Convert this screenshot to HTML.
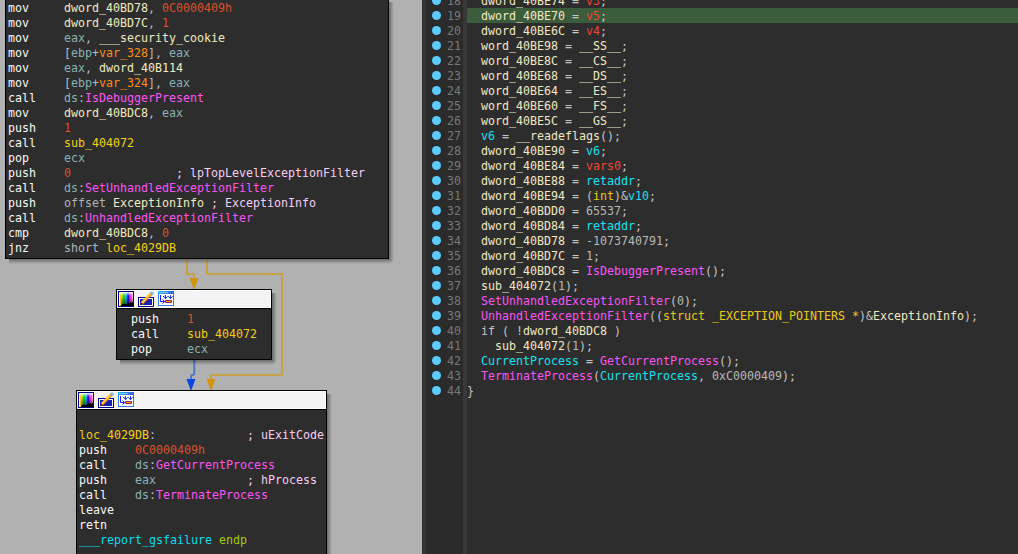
<!DOCTYPE html><html><head><meta charset="utf-8"><title>IDA</title><style>
html,body{margin:0;padding:0}
body{width:1018px;height:554px;overflow:hidden;background:#2d2d2d;position:relative;
 font-family:"DejaVu Sans Mono","Liberation Mono",monospace;font-size:11.63px;line-height:15px}
#left{position:absolute;left:0;top:0;width:422px;height:554px;background:#b1b1b1;overflow:hidden}
#split{position:absolute;left:422px;top:0;width:4px;height:554px;background:#333333}
#gutter{position:absolute;left:426px;top:0;width:37px;height:554px;background:#2b2b2b}
#gsep{position:absolute;left:463px;top:0;width:4px;height:554px;background:#383838}
#code{position:absolute;left:467px;top:0;width:551px;height:554px;background:#2d2d2d;overflow:hidden}
.node{position:absolute;border:1px solid #000;background:#2d2d2d;box-sizing:border-box}
.sh{position:absolute;background:
 linear-gradient(to right,rgba(0,0,0,.40),rgba(0,0,0,0)) right 0 top 4px/5px calc(100% - 9px) no-repeat,
 linear-gradient(to bottom,rgba(0,0,0,.40),rgba(0,0,0,0)) left 4px bottom 0/calc(100% - 9px) 5px no-repeat,
 radial-gradient(circle at 0 0,rgba(0,0,0,.40),rgba(0,0,0,0) 5px) right bottom/5px 5px no-repeat}
.hdr{height:18px;background:#f3f3f3;border-bottom:1px solid #000;position:relative;box-shadow:inset 0 0 0 1px #fff;
 background-image:linear-gradient(#fff,#fff);background-size:1px 1px;background-repeat:no-repeat;background-position:-9px -9px}
.hdr i{position:absolute;left:62px;right:3px;top:6px;height:10px;background-image:radial-gradient(circle at .5px .5px,#fff .6px,transparent .8px);background-size:4px 4px}
.body{padding:2px 0 2px 2px}
.l{height:15px;white-space:pre;display:block}
.ic{position:absolute;top:1px;width:16px;height:16px}
.m{color:#fafafa}.d{color:#f0ebc0}.n{color:#d9522e}.r{color:#88b2b4}.p{color:#b4bcc4}
.v{color:#fb8f14}.i{color:#f955f2}.s{color:#f5cf12}.c{color:#f8cef6}.k{color:#b0b4b8}
.b{color:#0cdcec}.e{color:#a8cc08}
.g{color:#f2e8c2}.x{color:#c6c6c6}.lv{color:#f04636}.cy{color:#18e0f0}.ty{color:#ecc81c}.nu{color:#b8b8b8}
.ln{position:absolute;left:447px;color:#787878;white-space:pre;height:15px;line-height:17px}
.dot{position:absolute;left:432px;width:9px;height:9px;border-radius:50%;background:#5ccbff}
.cl{position:absolute;left:0;width:551px;height:15px;white-space:pre;line-height:17px}
.hl{background:#3b5d3b}
</style></head><body>
<div id="left">
<svg style="position:absolute;left:0;top:0" width="422" height="554" viewBox="0 0 422 554">
<g fill="none" stroke-width="2" stroke="#c7a249" stroke-linejoin="round">
<path d="M187 259 V274 H194 V280"/>
<path d="M207 259 V274 H282 V375 H211 V381"/>
</g>
<path d="M194.3 360 V374 L193 375 H191.8 L191 376 V381" fill="none" stroke="#4c78cf" stroke-width="2" stroke-linejoin="round"/>
<path d="M189.5 278 H198.5 L194.4 289 H193.6 Z" fill="#cf940a"/>
<path d="M206.5 379 H215.5 L211.4 390 H210.6 Z" fill="#cf940a"/>
<path d="M186.5 379 H195.5 L191.4 390 H190.6 Z" fill="#0846de"/>
</svg>
<div class="sh" style="left:5px;top:-2px;width:389px;height:266px"></div><div class="node" style="left:5px;top:-2px;width:384px;height:261px;"><div class="body" style="padding-left:2px;padding-top:2px"><span class="l"><span class="m">mov     </span><span class="d">dword_40BD78</span><span class="p">, </span><span class="n">0C0000409h</span></span><span class="l"><span class="m">mov     </span><span class="d">dword_40BD7C</span><span class="p">, </span><span class="n">1</span></span><span class="l"><span class="m">mov     </span><span class="r">eax</span><span class="p">, </span><span class="d">___security_cookie</span></span><span class="l"><span class="m">mov     </span><span class="p">[</span><span class="r">ebp</span><span class="p">+</span><span class="v">var_328</span><span class="p">]</span><span class="p">, </span><span class="r">eax</span></span><span class="l"><span class="m">mov     </span><span class="r">eax</span><span class="p">, </span><span class="d">dword_40B114</span></span><span class="l"><span class="m">mov     </span><span class="p">[</span><span class="r">ebp</span><span class="p">+</span><span class="v">var_324</span><span class="p">]</span><span class="p">, </span><span class="r">eax</span></span><span class="l"><span class="m">call    </span><span class="r">ds</span><span class="p">:</span><span class="i">IsDebuggerPresent</span></span><span class="l"><span class="m">mov     </span><span class="d">dword_40BDC8</span><span class="p">, </span><span class="r">eax</span></span><span class="l"><span class="m">push    </span><span class="n">1</span></span><span class="l"><span class="m">call    </span><span class="s">sub_404072</span></span><span class="l"><span class="m">pop     </span><span class="r">ecx</span></span><span class="l"><span class="m">push    </span><span class="n">0</span>               <span class="c">; lpTopLevelExceptionFilter</span></span><span class="l"><span class="m">call    </span><span class="r">ds</span><span class="p">:</span><span class="i">SetUnhandledExceptionFilter</span></span><span class="l"><span class="m">push    </span><span class="k">offset</span> <span class="d">ExceptionInfo</span> <span class="c">; ExceptionInfo</span></span><span class="l"><span class="m">call    </span><span class="r">ds</span><span class="p">:</span><span class="i">UnhandledExceptionFilter</span></span><span class="l"><span class="m">cmp     </span><span class="d">dword_40BDC8</span><span class="p">, </span><span class="n">0</span></span><span class="l"><span class="m">jnz     </span><span class="k">short</span> <span class="s">loc_4029DB</span></span></div></div>
<div class="sh" style="left:116px;top:289px;width:161px;height:76px"></div><div class="node" style="left:116px;top:289px;width:156px;height:71px;"><div class="hdr"><i></i>
<svg class="ic" style="left:1px" width="16" height="16" viewBox="0 0 16 16">
<defs>
<linearGradient id="wtb" x1="0" x2="0" y1="0" y2="1">
<stop offset="0" stop-color="#fff" stop-opacity=".95"/><stop offset=".28" stop-color="#fff" stop-opacity="0"/>
</linearGradient>
<linearGradient id="bkb" x1="0" x2="0" y1="0" y2="1">
<stop offset=".35" stop-color="#000" stop-opacity="0"/><stop offset=".8" stop-color="#000" stop-opacity=".45"/>
<stop offset="1" stop-color="#000" stop-opacity=".7"/>
</linearGradient>
</defs>
<rect x="0" y="0" width="16" height="16" fill="#00007c"/>
<rect x="1" y="1" width="1.05" height="14" fill="#ffe6c0"/><rect x="2" y="1" width="1.05" height="14" fill="#ffc428"/><rect x="3" y="1" width="1.05" height="14" fill="#e4e000"/><rect x="4" y="1" width="1.05" height="14" fill="#8ce000"/><rect x="5" y="1" width="1.05" height="14" fill="#30d428"/><rect x="6" y="1" width="1.05" height="14" fill="#10c458"/><rect x="7" y="1" width="1.05" height="14" fill="#10d4c0"/><rect x="8" y="1" width="1.05" height="14" fill="#20a4f0"/><rect x="9" y="1" width="1.05" height="14" fill="#1434f0"/><rect x="10" y="1" width="1.05" height="14" fill="#2c10e0"/><rect x="11" y="1" width="1.05" height="14" fill="#b820f0"/><rect x="12" y="1" width="1.05" height="14" fill="#ff30f0"/><rect x="13" y="1" width="1.05" height="14" fill="#ff5cc4"/><rect x="14" y="1" width="1.05" height="14" fill="#ffb0d8"/>
<rect x="1" y="1" width="14" height="14" fill="url(#wtb)"/>
<rect x="3" y="1" width="12" height="14" fill="url(#bkb)"/>
<path d="M4 13 H9 V12 H12 V11 H13 V12 H14 V11 H15 V15 H3 V14 H4 Z" fill="#000"/>
<rect x="1" y="3" width="1" height="12" fill="#fff" opacity=".45"/>
</svg>
<svg class="ic" style="left:21px" width="16" height="16" viewBox="0 0 16 16">
<rect x="0.5" y="6.5" width="15" height="9" fill="#fff" stroke="#00008a"/>
<rect x="2" y="8" width="12" height="6" fill="#1a20b0"/>
<path d="M3.4 13 L13.6 2.6" stroke="#e8861c" stroke-width="2.8" stroke-linecap="butt"/>
<path d="M3.6 11.6 L12.6 2.2" stroke="#ffc81c" stroke-width="1.6"/>
<path d="M4.4 12 L13 3" stroke="#fff6d8" stroke-width=".8" stroke-dasharray="1 .6"/>
<path d="M2.6 13.6 L3 11.4 L5 13.2 Z" fill="#201408"/>
<circle cx="14" cy="2.1" r="1.7" fill="#4a9cbc"/>
<circle cx="14.1" cy="2" r=".8" fill="#f0fbff"/>
</svg>
<svg class="ic" style="left:41px" width="16" height="16" viewBox="0 0 16 16">
<defs><linearGradient id="tbb" x1="0" x2="1" y1="0" y2="0">
<stop offset="0" stop-color="#2cb4f8"/><stop offset="1" stop-color="#3c5ce0"/></linearGradient></defs>
<rect x="0.5" y="0.5" width="15" height="14" fill="#fff" stroke="#3c7cea"/>
<rect x="0" y="0" width="16" height="3" fill="url(#tbb)"/>
<rect x="1" y="1" width="9" height="1" fill="#8cd8ff" opacity=".8"/>
<path d="M2.5 4 V10.5 H6" fill="none" stroke="#1818f0" stroke-width="1"/>
<path d="M4.5 8.5 L6.8 10.5 L4.5 12.5" fill="none" stroke="#1818f0" stroke-width="1"/>
<path d="M5 5.5 h1.2 M9.4 5.5 h1.4 M14.4 5.5 h1.6" stroke="#1c3cf0" stroke-width="1"/>
<path d="M7.5 4 V8 M5.8 5.6 L7.5 7.8 L9.2 5.6 M12.5 4 V8 M10.8 5.6 L12.5 7.8 L14.2 5.6" fill="none" stroke="#1c3cf0" stroke-width="1"/>
<rect x="7" y="9" width="7" height="3" rx="1" fill="#a01858"/>
<rect x="8" y="10" width="5" height="1" fill="#ffa800"/>
</svg>
</div><div class="body" style="padding-left:14px;padding-top:3px"><span class="l"><span class="m">push    </span><span class="n">1</span></span><span class="l"><span class="m">call    </span><span class="s">sub_404072</span></span><span class="l"><span class="m">pop     </span><span class="r">ecx</span></span></div></div>
<div class="sh" style="left:76px;top:390px;width:256px;height:205px"></div><div class="node" style="left:76px;top:390px;width:251px;height:200px;"><div class="hdr"><i></i>
<svg class="ic" style="left:1px" width="16" height="16" viewBox="0 0 16 16">
<defs>
<linearGradient id="wtc" x1="0" x2="0" y1="0" y2="1">
<stop offset="0" stop-color="#fff" stop-opacity=".95"/><stop offset=".28" stop-color="#fff" stop-opacity="0"/>
</linearGradient>
<linearGradient id="bkc" x1="0" x2="0" y1="0" y2="1">
<stop offset=".35" stop-color="#000" stop-opacity="0"/><stop offset=".8" stop-color="#000" stop-opacity=".45"/>
<stop offset="1" stop-color="#000" stop-opacity=".7"/>
</linearGradient>
</defs>
<rect x="0" y="0" width="16" height="16" fill="#00007c"/>
<rect x="1" y="1" width="1.05" height="14" fill="#ffe6c0"/><rect x="2" y="1" width="1.05" height="14" fill="#ffc428"/><rect x="3" y="1" width="1.05" height="14" fill="#e4e000"/><rect x="4" y="1" width="1.05" height="14" fill="#8ce000"/><rect x="5" y="1" width="1.05" height="14" fill="#30d428"/><rect x="6" y="1" width="1.05" height="14" fill="#10c458"/><rect x="7" y="1" width="1.05" height="14" fill="#10d4c0"/><rect x="8" y="1" width="1.05" height="14" fill="#20a4f0"/><rect x="9" y="1" width="1.05" height="14" fill="#1434f0"/><rect x="10" y="1" width="1.05" height="14" fill="#2c10e0"/><rect x="11" y="1" width="1.05" height="14" fill="#b820f0"/><rect x="12" y="1" width="1.05" height="14" fill="#ff30f0"/><rect x="13" y="1" width="1.05" height="14" fill="#ff5cc4"/><rect x="14" y="1" width="1.05" height="14" fill="#ffb0d8"/>
<rect x="1" y="1" width="14" height="14" fill="url(#wtc)"/>
<rect x="3" y="1" width="12" height="14" fill="url(#bkc)"/>
<path d="M4 13 H9 V12 H12 V11 H13 V12 H14 V11 H15 V15 H3 V14 H4 Z" fill="#000"/>
<rect x="1" y="3" width="1" height="12" fill="#fff" opacity=".45"/>
</svg>
<svg class="ic" style="left:21px" width="16" height="16" viewBox="0 0 16 16">
<rect x="0.5" y="6.5" width="15" height="9" fill="#fff" stroke="#00008a"/>
<rect x="2" y="8" width="12" height="6" fill="#1a20b0"/>
<path d="M3.4 13 L13.6 2.6" stroke="#e8861c" stroke-width="2.8" stroke-linecap="butt"/>
<path d="M3.6 11.6 L12.6 2.2" stroke="#ffc81c" stroke-width="1.6"/>
<path d="M4.4 12 L13 3" stroke="#fff6d8" stroke-width=".8" stroke-dasharray="1 .6"/>
<path d="M2.6 13.6 L3 11.4 L5 13.2 Z" fill="#201408"/>
<circle cx="14" cy="2.1" r="1.7" fill="#4a9cbc"/>
<circle cx="14.1" cy="2" r=".8" fill="#f0fbff"/>
</svg>
<svg class="ic" style="left:41px" width="16" height="16" viewBox="0 0 16 16">
<defs><linearGradient id="tbc" x1="0" x2="1" y1="0" y2="0">
<stop offset="0" stop-color="#2cb4f8"/><stop offset="1" stop-color="#3c5ce0"/></linearGradient></defs>
<rect x="0.5" y="0.5" width="15" height="14" fill="#fff" stroke="#3c7cea"/>
<rect x="0" y="0" width="16" height="3" fill="url(#tbc)"/>
<rect x="1" y="1" width="9" height="1" fill="#8cd8ff" opacity=".8"/>
<path d="M2.5 4 V10.5 H6" fill="none" stroke="#1818f0" stroke-width="1"/>
<path d="M4.5 8.5 L6.8 10.5 L4.5 12.5" fill="none" stroke="#1818f0" stroke-width="1"/>
<path d="M5 5.5 h1.2 M9.4 5.5 h1.4 M14.4 5.5 h1.6" stroke="#1c3cf0" stroke-width="1"/>
<path d="M7.5 4 V8 M5.8 5.6 L7.5 7.8 L9.2 5.6 M12.5 4 V8 M10.8 5.6 L12.5 7.8 L14.2 5.6" fill="none" stroke="#1c3cf0" stroke-width="1"/>
<rect x="7" y="9" width="7" height="3" rx="1" fill="#a01858"/>
<rect x="8" y="10" width="5" height="1" fill="#ffa800"/>
</svg>
</div><div class="body" style="padding-left:2px;padding-top:3px"><span class="l"></span><span class="l"><span class="s">loc_4029DB</span><span class="p">:</span>             <span class="c">; uExitCode</span></span><span class="l"><span class="m">push    </span><span class="n">0C0000409h</span></span><span class="l"><span class="m">call    </span><span class="r">ds</span><span class="p">:</span><span class="i">GetCurrentProcess</span></span><span class="l"><span class="m">push    </span><span class="r">eax</span>             <span class="c">; hProcess</span></span><span class="l"><span class="m">call    </span><span class="r">ds</span><span class="p">:</span><span class="i">TerminateProcess</span></span><span class="l"><span class="m">leave</span></span><span class="l"><span class="m">retn</span></span><span class="l"><span class="b">___report_gsfailure</span> <span class="e">endp</span></span><span class="l"></span></div></div>
</div>
<div id="split"></div><div id="gutter"></div><div id="gsep"></div>
<div class="dot" style="top:-4px"></div><div class="ln" style="top:-7px">18</div>
<div class="dot" style="top:11px"></div><div class="ln" style="top:8px">19</div>
<div class="dot" style="top:26px"></div><div class="ln" style="top:23px">20</div>
<div class="dot" style="top:41px"></div><div class="ln" style="top:38px">21</div>
<div class="dot" style="top:56px"></div><div class="ln" style="top:53px">22</div>
<div class="dot" style="top:71px"></div><div class="ln" style="top:68px">23</div>
<div class="dot" style="top:86px"></div><div class="ln" style="top:83px">24</div>
<div class="dot" style="top:101px"></div><div class="ln" style="top:98px">25</div>
<div class="dot" style="top:116px"></div><div class="ln" style="top:113px">26</div>
<div class="dot" style="top:131px"></div><div class="ln" style="top:128px">27</div>
<div class="dot" style="top:146px"></div><div class="ln" style="top:143px">28</div>
<div class="dot" style="top:161px"></div><div class="ln" style="top:158px">29</div>
<div class="dot" style="top:176px"></div><div class="ln" style="top:173px">30</div>
<div class="dot" style="top:191px"></div><div class="ln" style="top:188px">31</div>
<div class="dot" style="top:206px"></div><div class="ln" style="top:203px">32</div>
<div class="dot" style="top:221px"></div><div class="ln" style="top:218px">33</div>
<div class="dot" style="top:236px"></div><div class="ln" style="top:233px">34</div>
<div class="dot" style="top:251px"></div><div class="ln" style="top:248px">35</div>
<div class="dot" style="top:266px"></div><div class="ln" style="top:263px">36</div>
<div class="dot" style="top:281px"></div><div class="ln" style="top:278px">37</div>
<div class="dot" style="top:296px"></div><div class="ln" style="top:293px">38</div>
<div class="dot" style="top:311px"></div><div class="ln" style="top:308px">39</div>
<div class="dot" style="top:326px"></div><div class="ln" style="top:323px">40</div>
<div class="dot" style="top:341px"></div><div class="ln" style="top:338px">41</div>
<div class="dot" style="top:356px"></div><div class="ln" style="top:353px">42</div>
<div class="dot" style="top:371px"></div><div class="ln" style="top:368px">43</div>
<div class="dot" style="top:386px"></div><div class="ln" style="top:383px">44</div>
<div id="code">
<div class="cl" style="top:-7px">  <span class="g">dword_40BE74</span><span class="x"> = </span><span class="lv">v3</span><span class="x">;</span></div>
<div class="cl hl" style="top:8px">  <span class="g">dword_40BE70</span><span class="x"> = </span><span class="lv">v5</span><span class="x">;</span></div>
<div class="cl" style="top:23px">  <span class="g">dword_40BE6C</span><span class="x"> = </span><span class="lv">v4</span><span class="x">;</span></div>
<div class="cl" style="top:38px">  <span class="g">word_40BE98</span><span class="x"> = </span><span class="g">__SS__</span><span class="x">;</span></div>
<div class="cl" style="top:53px">  <span class="g">word_40BE8C</span><span class="x"> = </span><span class="g">__CS__</span><span class="x">;</span></div>
<div class="cl" style="top:68px">  <span class="g">word_40BE68</span><span class="x"> = </span><span class="g">__DS__</span><span class="x">;</span></div>
<div class="cl" style="top:83px">  <span class="g">word_40BE64</span><span class="x"> = </span><span class="g">__ES__</span><span class="x">;</span></div>
<div class="cl" style="top:98px">  <span class="g">word_40BE60</span><span class="x"> = </span><span class="g">__FS__</span><span class="x">;</span></div>
<div class="cl" style="top:113px">  <span class="g">word_40BE5C</span><span class="x"> = </span><span class="g">__GS__</span><span class="x">;</span></div>
<div class="cl" style="top:128px">  <span class="cy">v6</span><span class="x"> = </span><span class="g">__readeflags</span><span class="x">();</span></div>
<div class="cl" style="top:143px">  <span class="g">dword_40BE90</span><span class="x"> = </span><span class="cy">v6</span><span class="x">;</span></div>
<div class="cl" style="top:158px">  <span class="g">dword_40BE84</span><span class="x"> = </span><span class="lv">vars0</span><span class="x">;</span></div>
<div class="cl" style="top:173px">  <span class="g">dword_40BE88</span><span class="x"> = </span><span class="cy">retaddr</span><span class="x">;</span></div>
<div class="cl" style="top:188px">  <span class="g">dword_40BE94</span><span class="x"> = </span><span class="x">(</span><span class="ty">int</span><span class="x">)&amp;</span><span class="cy">v10</span><span class="x">;</span></div>
<div class="cl" style="top:203px">  <span class="g">dword_40BDD0</span><span class="x"> = </span><span class="nu">65537</span><span class="x">;</span></div>
<div class="cl" style="top:218px">  <span class="g">dword_40BD84</span><span class="x"> = </span><span class="cy">retaddr</span><span class="x">;</span></div>
<div class="cl" style="top:233px">  <span class="g">dword_40BD78</span><span class="x"> = </span><span class="nu">-1073740791</span><span class="x">;</span></div>
<div class="cl" style="top:248px">  <span class="g">dword_40BD7C</span><span class="x"> = </span><span class="nu">1</span><span class="x">;</span></div>
<div class="cl" style="top:263px">  <span class="g">dword_40BDC8</span><span class="x"> = </span><span class="i">IsDebuggerPresent</span><span class="x">()</span><span class="x">;</span></div>
<div class="cl" style="top:278px">  <span class="g">sub_404072</span><span class="x">(</span><span class="nu">1</span><span class="x">);</span></div>
<div class="cl" style="top:293px">  <span class="i">SetUnhandledExceptionFilter</span><span class="x">(</span><span class="nu">0</span><span class="x">);</span></div>
<div class="cl" style="top:308px">  <span class="i">UnhandledExceptionFilter</span><span class="x">((</span><span class="ty">struct _EXCEPTION_POINTERS *</span><span class="x">)&amp;</span><span class="g">ExceptionInfo</span><span class="x">);</span></div>
<div class="cl" style="top:323px">  <span class="x">if ( !</span><span class="g">dword_40BDC8</span><span class="x"> )</span></div>
<div class="cl" style="top:338px">    <span class="g">sub_404072</span><span class="x">(</span><span class="nu">1</span><span class="x">);</span></div>
<div class="cl" style="top:353px">  <span class="cy">CurrentProcess</span><span class="x"> = </span><span class="i">GetCurrentProcess</span><span class="x">();</span></div>
<div class="cl" style="top:368px">  <span class="i">TerminateProcess</span><span class="x">(</span><span class="cy">CurrentProcess</span><span class="x">, </span><span class="nu">0xC0000409</span><span class="x">);</span></div>
<div class="cl" style="top:383px"><span class="x">}</span></div>
</div>
</body></html>
